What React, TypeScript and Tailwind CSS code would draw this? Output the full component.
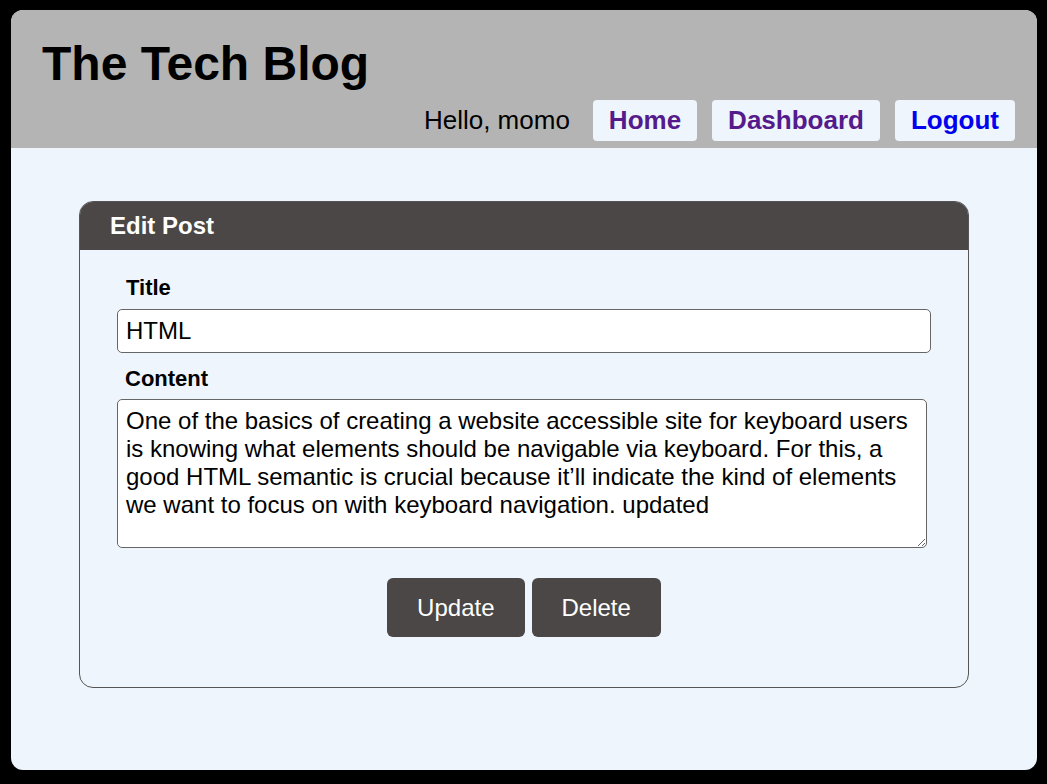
export default function App() {
  return (
    <div className="min-h-[784px] bg-black pt-[10px] pl-[11px] pr-[10px] pb-[14px] font-['Liberation_Sans',Arial,sans-serif]">
      <div className="flex min-h-[760px] flex-col overflow-hidden rounded-[12px] bg-[#eef5fc]">
        {/* Header */}
        <header className="bg-[#b4b4b4] pb-[7px]">
          <h1 className="pl-[31px] pt-[26px] text-[48px] font-bold leading-[55px] text-black">
            The Tech Blog
          </h1>
          <nav className="mt-[9px] flex items-center justify-end pr-[22px]">
            <span className="mr-[23px] text-[26px] text-black">Hello, momo</span>
            <div className="flex gap-[15px]">
              <a href="#" className="flex h-[41px] items-center rounded-[4px] bg-[#eef5fc] px-[16px] text-[26px] font-bold text-[#551a8b]">
                Home
              </a>
              <a href="#" className="flex h-[41px] items-center rounded-[4px] bg-[#eef5fc] px-[16px] text-[26px] font-bold text-[#551a8b]">
                Dashboard
              </a>
              <a href="#" className="flex h-[41px] items-center rounded-[4px] bg-[#eef5fc] px-[16px] text-[26px] font-bold text-[#0000ee]">
                Logout
              </a>
            </div>
          </nav>
        </header>

        {/* Edit card */}
        <main className="px-[68px] pt-[53px]">
          <section className="overflow-hidden rounded-[14px] border border-[#555]">
            <div className="flex h-[48px] items-center bg-[#4b4747] pl-[30px] text-[24px] font-bold text-white">
              Edit Post
            </div>
            <form className="flex flex-col px-[37px] pt-[25px] pb-[50px]">
              <label className="pl-[9px] text-[22px] font-bold leading-[25px] text-black">Title</label>
              <input
                defaultValue="HTML"
                className="mt-[9px] h-[44px] w-full rounded-[5px] border border-[#666] bg-white px-[8px] text-[24px] text-black outline-none"
              />
              <label className="mt-[13px] pl-[8px] text-[22px] font-bold leading-[25px] text-black">Content</label>
              <textarea
                defaultValue="One of the basics of creating a website accessible site for keyboard users is knowing what elements should be navigable via keyboard. For this, a good HTML semantic is crucial because it’ll indicate the kind of elements we want to focus on with keyboard navigation. updated"
                className="mt-[8px] h-[149px] w-[810px] rounded-[5px] border border-[#666] bg-white px-[8px] pt-[7px] text-[24px] leading-[28px] text-black outline-none"
              />
              <div className="mt-[30px] flex justify-center gap-[7px]">
                <button type="button" className="h-[59px] rounded-[6px] bg-[#4b4747] px-[30px] text-[24px] text-white">
                  Update
                </button>
                <button type="button" className="h-[59px] rounded-[6px] bg-[#4b4747] px-[30px] text-[24px] text-white">
                  Delete
                </button>
              </div>
            </form>
          </section>
        </main>
      </div>
    </div>
  );
}
